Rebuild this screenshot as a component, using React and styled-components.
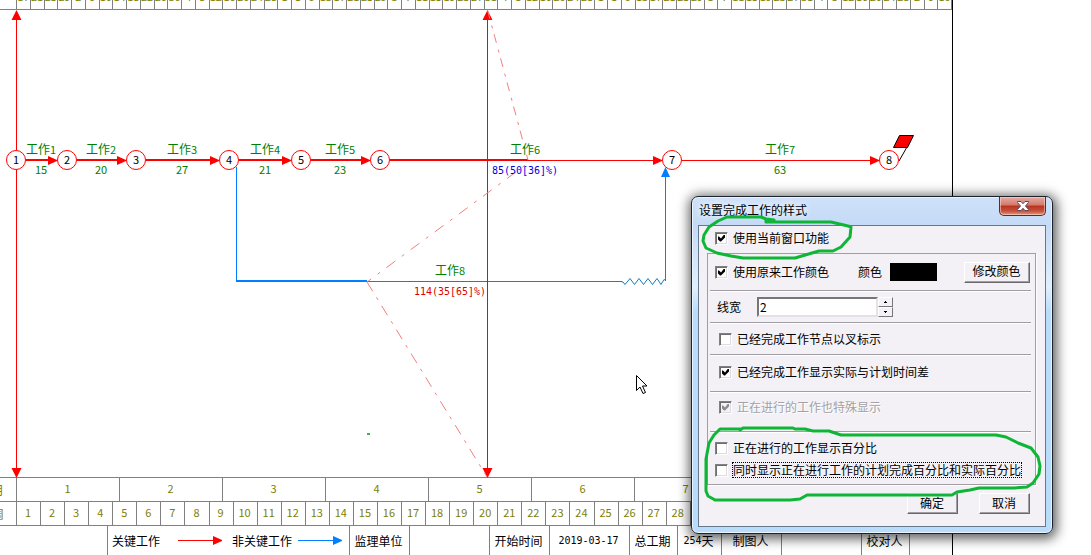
import React from "react";
import styled, { createGlobalStyle, css } from "styled-components";

const CJK = `"Noto Sans CJK SC", sans-serif`;
const MONO = `"DejaVu Sans Mono", monospace`;
const RED = "#ff0000";
const BLUE = "#0080ff";
const PINK = "#f08080";

const GlobalStyle = createGlobalStyle`
  * { box-sizing: border-box; }
  body { margin: 0; background: #fff; color: #000; font: 12px/16px ${CJK}; }
`;

const Desktop = styled.div`
  position: relative;
  min-height: 100vh;
  display: flex;
  overflow: hidden;
`;

const Sheet = styled.main`
  flex: 1;
  min-width: 0;
  margin-right: 138px;
  border-right: 1px solid #000;
  display: flex;
  flex-direction: column;
`;

const ScaleRow = styled.div`
  display: flex;
  flex: none;
  height: ${(p) => (p.$short ? 10 : 24)}px;
  border-bottom: 1px solid #808080;
  color: #808000;
  overflow: hidden;
`;

const ScaleHead = styled.div`
  flex: none;
  width: 17px;
  padding-right: 12px;
  border-right: 1px solid #808080;
  display: flex;
  justify-content: flex-end;
  align-items: center;
  overflow: hidden;
`;

const ScaleCell = styled.div`
  flex: ${(p) => p.$days} 1 0;
  min-width: 0;
  border-right: 1px solid #808080;
  padding-bottom: ${(p) => (p.$short ? 0 : 3)}px;
  text-indent: ${(p) => (p.$short ? 0 : -1)}px;
  display: flex;
  justify-content: center;
  align-items: ${(p) => (p.$short ? "flex-start" : "center")};
  overflow: hidden;
  font: 11px/12px ${CJK};
`;

const DayText = styled.span`
  margin-top: -10px;
`;

const Chart = styled.svg`
  display: block;
  flex: none;
  width: 100%;
  height: 468px;
  border-bottom: 1px solid #808080;
  overflow: visible;
`;

const TaskName = styled.text`
  font: 12px ${CJK};
  fill: #008000;
  text-anchor: middle;
`;

const digits = css`
  font-family: ${MONO};
  font-size: 10px;
`;

const plainDigits = css`
  font-family: ${CJK};
  font-size: 11px;
`;

const NameDigit = styled.tspan`
  ${plainDigits}
`;

const ChartNumber = styled.text`
  ${(p) => (p.$formula ? digits : plainDigits)}
  fill: ${(p) => p.$color || "#008000"};
  text-anchor: middle;
`;

const InfoRow = styled.footer`
  flex: 1;
  min-height: 29px;
  display: flex;
  white-space: nowrap;
  overflow: hidden;
`;

const InfoCell = styled.div`
  flex: none;
  width: ${(p) => p.$w}px;
  border-right: 1px solid #808080;
  padding-right: 2px;
  display: flex;
  align-items: center;
  justify-content: center;
`;

const InfoDigits = styled.span`
  ${digits}
`;

const LegendCell = styled(InfoCell)`
  justify-content: flex-start;
  padding-left: 4px;
`;

const LegendArrow = styled.svg`
  flex: none;
  margin: 0 ${(p) => p.$after}px 0 ${(p) => p.$before}px;
`;

const Pointer = styled.svg`
  position: absolute;
  left: 635px;
  top: 374px;
`;

const Dialog = styled.section`
  position: absolute;
  top: 196px;
  right: 38px;
  width: 362px;
  padding: 0 6px 6px;
  border: 1px solid #1c222b;
  border-radius: 7px;
  background: linear-gradient(#cfe1fa 0, #c4daf6 28px, #e0effd 90px, #b9dcfb 115px, #b9dcfb);
  box-shadow: inset 0 0 0 1px #e8f4ff, 1px 2px 12px 3px rgba(0, 0, 0, 0.62);
`;

const TitleBar = styled.header`
  height: 28px;
  display: flex;
  justify-content: space-between;
  align-items: flex-start;
`;

const Title = styled.h1`
  margin: 5px 0 0 1px;
  font: 12px/16px ${CJK};
  text-shadow: 0 0 6px #fff, 0 0 8px #fff;
`;

const CloseButton = styled.button`
  width: 47px;
  height: 19px;
  padding: 0;
  border: 1px solid #5a2a2c;
  border-top: 0;
  border-radius: 0 0 5px 5px;
  background: linear-gradient(#e6aca2 0, #d4796c 8px, #b83321 9px, #c5523c 14px, #e19a80);
  box-shadow: inset 0 0 0 1px rgba(255, 220, 210, 0.55);
  display: flex;
  align-items: center;
  justify-content: center;
`;

const Body = styled.form`
  border: 1px solid #66788a;
  background: #f3f1f5;
  padding: 0 9px 12px 8px;
`;

const Option = styled.label`
  display: flex;
  align-items: center;
  gap: 5px;
  height: 22px;
  white-space: nowrap;
  ${(p) =>
    p.$disabled &&
    css`
      color: #a3a1a5;
      text-shadow: 1px 1px 0 #fff;
    `}
`;

const TopOption = styled(Option)`
  height: 27px;
  padding: 0 0 3px 8px;
`;

const FocusText = styled.span`
  outline: 1px dotted #000;
  line-height: 14px;
`;

const Tick = styled.input.attrs({ type: "checkbox" })`
  appearance: none;
  flex: none;
  width: 13px;
  height: 13px;
  margin: 0;
  border: 1px solid;
  border-color: #808080 #fff #fff #808080;
  box-shadow: inset 1px 1px 0 #6e6e6e, inset -1px -1px 0 #dedce0;
  background: #fff;
  color: #000;
  &:disabled {
    background: #f3f1f5;
    color: #8c8a8e;
  }
  &:checked::after {
    content: "";
    display: block;
    width: 7px;
    height: 7px;
    margin: 2px;
    background: currentColor;
    clip-path: polygon(0 2px, 1px 2px, 3px 4px, 6px 0, 7px 0, 7px 3px, 3px 7px, 2px 7px, 0 5px);
  }
`;

const Group = styled.fieldset`
  margin: 0;
  min-width: 0;
  padding: 0 4px 0 2px;
  border: 1px solid #a09ea2;
  box-shadow: 1px 1px 0 #fff;
`;

const GroupRow = styled.div`
  display: flex;
  align-items: center;
  height: ${(p) => p.$h}px;
  padding: 0 1px ${(p) => p.$lift || 0}px ${(p) => p.$indent || 5}px;
  border-bottom: 1px solid #a09ea2;
  box-shadow: 0 1px 0 #fff;
  margin-bottom: 1px;
`;

const LastRows = styled.div`
  padding: 4px 0 3px 5px;
`;

const ColorLabel = styled.span`
  margin-left: auto;
`;

const Swatch = styled.span`
  width: 47px;
  height: 18px;
  margin: 0 27px 0 8px;
  background: #000;
`;

const PushButton = styled.button`
  width: ${(p) => p.$w}px;
  height: 21px;
  padding: 0 1px 2px 0;
  border: 1px solid;
  border-color: #fff #6a686c #6a686c #fff;
  box-shadow: inset -1px -1px 0 #a09ea2;
  background: #f3f1f5;
  color: #000;
  font: 12px/16px ${CJK};
`;

const WidthInput = styled.input`
  width: 121px;
  height: 20px;
  margin: 0 0 0 16px;
  padding: 0 1px 1px;
  border: 2px solid;
  border-color: #77757a #e4e2e6 #e4e2e6 #77757a;
  background: #fff;
  font: 12px/14px ${CJK};
`;

const Spinner = styled.div`
  display: flex;
  flex-direction: column;
`;

const SpinButton = styled.button`
  width: 15px;
  height: 10px;
  padding: 0;
  border: 1px solid;
  border-color: #fff #77757a #77757a #fff;
  background: #f3f1f5;
  display: flex;
  align-items: center;
  justify-content: center;
`;

const Actions = styled.div`
  display: flex;
  justify-content: flex-end;
  gap: 21px;
  padding: 8px 6px 0 0;
`;

const Marker = styled.svg`
  position: absolute;
  inset: 0;
  width: 100%;
  height: 100%;
  overflow: visible;
  pointer-events: none;
`;

const START = Date.UTC(2019, 2, 17);
const dayTicks = Array.from({ length: 68 }, (_, i) => new Date(START + i * 4 * 86400000).getUTCDate());
const months = Array.from({ length: 10 }, (_, i) => ({ label: i < 9 ? i + 1 : "", days: i < 9 ? 30 : 2 }));
const weeks = Array.from({ length: 39 }, (_, i) => ({ label: i + 1, days: i < 38 ? 7 : 6 }));

const nodes = [16, 67, 136, 229, 301, 380, 672, 889];
const tasks = [
  { no: 1, x: 41, y: 154, value: "15" },
  { no: 2, x: 101, y: 154, value: "20" },
  { no: 3, x: 182, y: 154, value: "27" },
  { no: 4, x: 265, y: 154, value: "21" },
  { no: 5, x: 340, y: 154, value: "23" },
  { no: 6, x: 525, y: 154, value: "85(50[36]%)", color: "#0000e0", formula: true },
  { no: 7, x: 780, y: 154, value: "63" },
  { no: 8, x: 450, y: 275, value: "114(35[65]%)", color: "#e00000", formula: true },
];

function Scale({ head, cells }) {
  return (
    <ScaleRow>
      <ScaleHead>{head}</ScaleHead>
      {cells.map((c, i) => (
        <ScaleCell key={i} $days={c.days}>{c.label}</ScaleCell>
      ))}
    </ScaleRow>
  );
}

function DateLine({ x }) {
  return (
    <g fill={RED}>
      <rect x={x} y="12" width="1" height="464" shapeRendering="crispEdges" />
      <path d={`M${x + 0.5} 10l5 10h-10z M${x + 0.5} 478l5 -10h-10z`} />
    </g>
  );
}

function Network() {
  return (
    <Chart role="img" aria-label="网络图">
      <g transform="translate(0,-10)">
        <DateLine x={16} />
        <g stroke={RED} fill="none" shapeRendering="crispEdges">
          {nodes.slice(0, 5).map((x, i) => (
            <path key={x} d={`M${x + 10} 160H${nodes[i + 1] - 12}`} strokeWidth="2" />
          ))}
          <path d="M390 160H528" strokeWidth="2" />
          <path d="M528 160.5H662M682 160.5H879" />
        </g>
        <g fill={RED}>
          {nodes.slice(1).map((x) => (
            <path key={x} d={`M${x - 19} 156v9l9 -4v-1z`} />
          ))}
        </g>
        <g stroke={BLUE} fill="none" shapeRendering="crispEdges">
          <path d="M236.5 167V281M367 281.5H622M665.5 281V170" />
          <path d="M236 281H367" strokeWidth="2" />
        </g>
        <path d="M665.5 167l4.500 10h-9z" fill={BLUE} />
        <path
          d="M621 281.500l2 0.500 2 2.500 5-6 4.500 6 4.500-6 4.500 6 4.500-6 4.500 6 4.500-6 4 6 3-5 2 1"
          fill="none"
          stroke="#1080c0"
        />
        <DateLine x={487} />
        <g stroke={PINK} fill="none">
          <path d="M487.500 10L528 160" strokeDasharray="9 7 3 6" />
          <path d="M528 163L367 282" strokeDasharray="11 8 3 8" strokeDashoffset="15" />
          <path d="M367 282L487 477" strokeDasharray="11 7 3 7" />
        </g>
        {tasks.map((t) => (
          <React.Fragment key={t.no}>
            <TaskName x={t.x} y={t.y}>
              工作<NameDigit>{t.no}</NameDigit>
            </TaskName>
            <ChartNumber x={t.x} y={t.y + 20} $color={t.color} $formula={t.formula}>{t.value}</ChartNumber>
          </React.Fragment>
        ))}
        <path d="M907 147L899 161" stroke="#000" />
        <path d="M899.500 135.500h14l-6 12h-14z" fill={RED} stroke="#000" />
        {nodes.map((x, i) => (
          <g key={x}>
            <circle cx={x} cy="160" r="9.500" fill="#fff" stroke={RED} />
            <ChartNumber x={x} y="164" $color="#000">{i + 1}</ChartNumber>
          </g>
        ))}
        <rect x="367" y="433" width="3" height="2" fill="#3cb45a" />
      </g>
    </Chart>
  );
}

function Arrow({ color, before, after }) {
  return (
    <LegendArrow width="44" height="9" $before={before} $after={after} aria-hidden="true">
      <path d="M0 4h35v-4l9 4v1l-9 4v-4h-35z" fill={color} />
    </LegendArrow>
  );
}

function StyleDialog() {
  return (
    <Dialog role="dialog" aria-labelledby="dialog-title">
      <TitleBar>
        <Title id="dialog-title">设置完成工作的样式</Title>
        <CloseButton type="button" aria-label="关闭">
          <svg width="12" height="10" viewBox="0 0 12 10">
            <path
              d="M.5.500h3.500l2 2.200 2-2.200h3.500v1l-3 3.500 3 3.500v1h-3.500l-2-2.200-2 2.200h-3.500v-1l3-3.500-3-3.500z"
              fill="#fff"
              stroke="#574a5c"
            />
          </svg>
        </CloseButton>
      </TitleBar>
      <Body onSubmit={(e) => e.preventDefault()}>
        <TopOption>
          <Tick defaultChecked />
          使用当前窗口功能
        </TopOption>
        <Group aria-label="完成工作的样式">
          <GroupRow $h={37}>
            <Option>
              <Tick defaultChecked />
              使用原来工作颜色
            </Option>
            <ColorLabel>颜色</ColorLabel>
            <Swatch />
            <PushButton type="button" $w={66}>修改颜色</PushButton>
          </GroupRow>
          <GroupRow $h={31} $indent={7}>
            <label htmlFor="line-width">线宽</label>
            <WidthInput id="line-width" type="text" defaultValue="2" />
            <Spinner>
              <SpinButton type="button" aria-label="增加">
                <svg width="3" height="2"><path d="M1 0h1v1h1v1h-3v-1h1z" /></svg>
              </SpinButton>
              <SpinButton type="button" aria-label="减少">
                <svg width="3" height="2"><path d="M0 0h3v1h-1v1h-1v-1h-1z" /></svg>
              </SpinButton>
            </Spinner>
          </GroupRow>
          <GroupRow $h={31} $indent={9}>
            <Option>
              <Tick />
              已经完成工作节点以叉标示
            </Option>
          </GroupRow>
          <GroupRow $h={36} $indent={9} $lift={3}>
            <Option>
              <Tick defaultChecked />
              已经完成工作显示实际与计划时间差
            </Option>
          </GroupRow>
          <GroupRow $h={39} $indent={9} $lift={10}>
            <Option $disabled>
              <Tick defaultChecked disabled />
              正在进行的工作也特殊显示
            </Option>
          </GroupRow>
          <LastRows>
            <Option>
              <Tick />
              正在进行的工作显示百分比
            </Option>
            <Option>
              <Tick />
              <FocusText>同时显示正在进行工作的计划完成百分比和实际百分比</FocusText>
            </Option>
          </LastRows>
        </Group>
        <Actions>
          <PushButton type="submit" $w={51}>确定</PushButton>
          <PushButton type="button" $w={51}>取消</PushButton>
        </Actions>
      </Body>
      <Marker aria-hidden="true">
        <g transform="translate(-692,-197)" fill="none" stroke="#0fb536" strokeWidth="3" strokeLinejoin="round" strokeLinecap="round">
          <path d="M774 220L766 219 761 217 727 217 718 221 709 227 704 235 703 241 706 248 717 253 731 256 743 258H795L812 253 819 251H833L841 247 850 237 851 227 848 226 831 222H766V219" />
          <path d="M740 430L743 428H793L795 429 805 429 813 431H829L841 435H996L1006 437 1018 443 1031 448 1038 457 1040 466 1039 474 1033 483 1027 487 1014 488H979L970 490 957 492 952 495H807L800 499 790 500H715L708 496 706 491V459L709 443 714 435 720 429H740" />
        </g>
      </Marker>
    </Dialog>
  );
}

export default function App() {
  return (
    <Desktop>
      <GlobalStyle />
      <Sheet>
        <ScaleRow $short>
          <ScaleHead />
          {dayTicks.map((d, i) => (
            <ScaleCell key={i} $days={4} $short>
              <DayText>{d}</DayText>
            </ScaleCell>
          ))}
        </ScaleRow>
        <Network />
        <Scale head="月" cells={months} />
        <Scale head="周" cells={weeks} />
        <InfoRow>
          <InfoCell $w={108} />
          <LegendCell $w={242}>
            关键工作
            <Arrow color={RED} before={18} after={10} />
            非关键工作
            <Arrow color={BLUE} before={6} after={0} />
          </LegendCell>
          <InfoCell $w={60}>监理单位</InfoCell>
          <InfoCell $w={80} />
          <InfoCell $w={60}>开始时间</InfoCell>
          <InfoCell $w={80}><InfoDigits>2019-03-17</InfoDigits></InfoCell>
          <InfoCell $w={48}>总工期</InfoCell>
          <InfoCell $w={44}><InfoDigits>254</InfoDigits>天</InfoCell>
          <InfoCell $w={60}>制图人</InfoCell>
          <InfoCell $w={80} />
          <InfoCell $w={48}>校对人</InfoCell>
        </InfoRow>
      </Sheet>
      <Pointer width="13" height="21" viewBox="0 0 13 21" aria-hidden="true">
        <path d="M1.500 1.500v15l3.500-3.500 3 6.500 2.500-1-3-6.500h4.500z" fill="#fff" stroke="#000" />
      </Pointer>
      <StyleDialog />
    </Desktop>
  );
}
